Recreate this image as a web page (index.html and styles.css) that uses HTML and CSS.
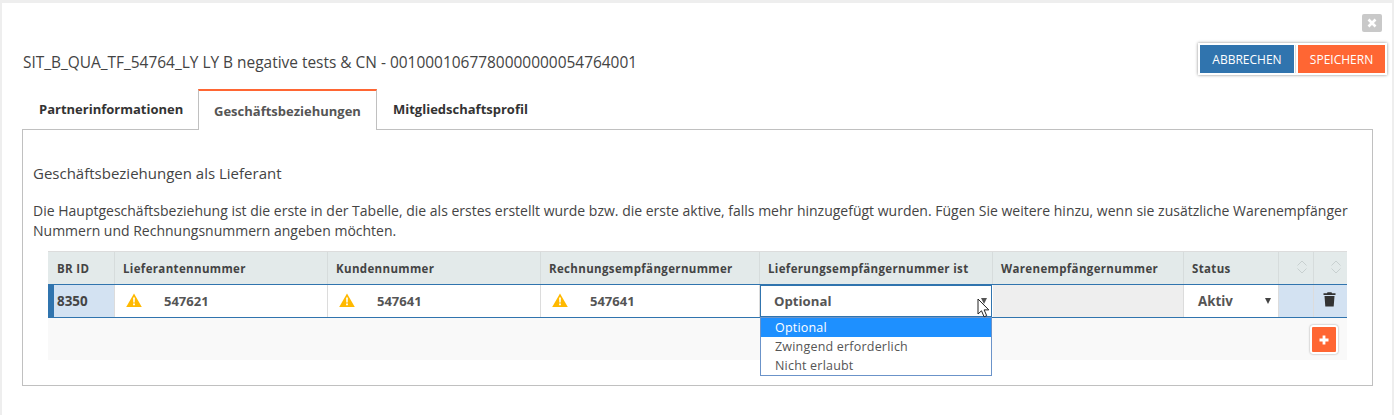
FILE: index.html
```html
<!DOCTYPE html>
<html lang="de">
<head>
<meta charset="utf-8">
<title>Geschäftsbeziehungen</title>
<link rel="stylesheet" href="styles.css">
</head>
<body>
<div class="modal">
  <div class="close-row">
    <span class="close-btn"><svg width="10" height="10" viewBox="0 0 10 10"><path d="M1.5 1.5l7 7M8.500 1.500l-7 7" stroke="#fff" stroke-width="2.600" fill="none"/></svg></span>
  </div>
  <header class="title-row">
    <h1 class="title">SIT_B_QUA_TF_54764_LY LY B negative tests &amp; CN - 0010001067780000000054764001</h1>
    <div class="actions">
      <button class="btn btn-blue">ABBRECHEN</button>
      <button class="btn btn-orange">SPEICHERN</button>
    </div>
  </header>
  <nav class="tabs">
    <span class="tab">Partnerinformationen</span>
    <span class="tab tab-active">Geschäftsbeziehungen</span>
    <span class="tab">Mitgliedschaftsprofil</span>
  </nav>
  <section class="panel">
    <h2 class="panel-title">Geschäftsbeziehungen als Lieferant</h2>
    <p class="panel-text">Die Hauptgeschäftsbeziehung ist die erste in der Tabelle, die als erstes erstellt wurde bzw. die erste aktive, falls mehr hinzugefügt wurden. Fügen Sie weitere hinzu, wenn sie zusätzliche Warenempfänger Nummern und Rechnungsnummern angeben möchten.</p>
    <div class="table">
      <div class="head">
        <div class="hc hc-id">BR ID</div>
        <div class="hc">Lieferantennummer</div>
        <div class="hc">Kundennummer</div>
        <div class="hc">Rechnungsempfängernummer</div>
        <div class="hc">Lieferungsempfängernummer ist</div>
        <div class="hc">Warenempfängernummer</div>
        <div class="hc">Status</div>
        <div class="hc hc-sort"><svg class="sort" width="12" height="16" viewBox="0 0 12 16"><path d="M1.500 6.500L6 2l4.500 4.500M1.500 9.500L6 14l4.500-4.500" stroke="#c8d0d0" fill="none"/></svg></div>
        <div class="hc hc-sort"><svg class="sort" width="12" height="16" viewBox="0 0 12 16"><path d="M1.500 6.500L6 2l4.500 4.500M1.500 9.500L6 14l4.500-4.500" stroke="#c8d0d0" fill="none"/></svg></div>
      </div>
      <div class="row">
        <div class="c c-id">8350</div>
        <div class="c c-num"><svg class="warn" width="16" height="14" viewBox="0 0 16 14"><path d="M8 0.500L15.800 14H0.200z" fill="#ffb900"/><path d="M7.100 4.500h1.800l-.2 5H7.300zM7.100 10.600h1.800v1.700H7.100z" fill="#fff"/></svg>547621</div>
        <div class="c c-num"><svg class="warn" width="16" height="14" viewBox="0 0 16 14"><path d="M8 0.500L15.800 14H0.200z" fill="#ffb900"/><path d="M7.100 4.500h1.800l-.2 5H7.300zM7.100 10.600h1.800v1.700H7.100z" fill="#fff"/></svg>547641</div>
        <div class="c c-num"><svg class="warn" width="16" height="14" viewBox="0 0 16 14"><path d="M8 0.500L15.800 14H0.200z" fill="#ffb900"/><path d="M7.100 4.500h1.800l-.2 5H7.300zM7.100 10.600h1.800v1.700H7.100z" fill="#fff"/></svg>547641</div>
        <div class="c c-select">
          <div class="select-open">Optional<span class="caret"></span></div>
          <ul class="dropdown">
            <li class="opt opt-on">Optional</li>
            <li class="opt">Zwingend erforderlich</li>
            <li class="opt">Nicht erlaubt</li>
          </ul>
          <svg class="cursor" width="14" height="20" viewBox="0 0 14 20"><path d="M1 1v15l3.500-3.200 2.600 6 2.600-1.100-2.600-5.800h4.700z" fill="#fff" stroke="#222" stroke-width="1"/></svg>
        </div>
        <div class="c c-disabled"></div>
        <div class="c c-status">Aktiv<span class="caret"></span></div>
        <div class="c c-blue"></div>
        <div class="c c-blue c-trash"><svg class="trash" width="13" height="16" viewBox="0 0 13 16"><path d="M4.500 1.200h4l.5 1h3.500v1.800H.5V2.200H4zM1.500 5h10l-.8 10.500H2.300z" fill="#333"/></svg></div>
      </div>
      <div class="foot"><button class="add"><svg width="10" height="10" viewBox="0 0 10 10"><path d="M5 0.500v9M0.500 5h9" stroke="#fff" stroke-width="2.800" fill="none"/></svg></button></div>
    </div>
  </section>
</div>
</body>
</html>
```
FILE: styles.css
```css
* { box-sizing: border-box; }
html, body { margin: 0; height: 100%; }
body { background: #eeeeee; padding: 3px 2px 0 2px; font-family: "Open Sans", sans-serif; color: #444; overflow: hidden; }
.modal { background: #fff; height: 412px; padding: 11px 5px 0 20px; }
.close-row { display: flex; justify-content: flex-end; height: 17px; padding-right: 5px; }
.close-btn { width: 20px; height: 18px; background: #c9c9c9; border-radius: 2px; display: flex; align-items: center; justify-content: center; }
.title-row { display: flex; justify-content: space-between; align-items: center; height: 32px; margin-top: 12px; }
.title { margin: 6px 0 0 1px; font-size: 15.450px; font-weight: 400; color: #444; letter-spacing: 0; }
.actions { display: flex; padding: 2px; background: #fff; box-shadow: 0 0 3px rgba(0,0,0,.45); height: 32px; width: 189px; }
.btn { border: 0; color: #fff; font-family: "Open Sans", sans-serif; font-size: 12px; height: 28px; padding: 0; }
.btn-blue { background: #3074ae; width: 94px; }
.btn-orange { background: #ff6633; width: 87px; margin-left: 4px; box-shadow: -2px 0 0 #fff, -3px 0 0 #dcdcdc; }
.tabs { display: flex; margin: 14px 0 0 0; height: 41px; position: relative; z-index: 1; }
.tab { font-size: 13px; font-weight: 700; color: #333; padding: 11px 15px 0 17px; width: 176px; }
.tab-active { width: 179px; background: #fff; color: #555; border: 1px solid #c0c0c0; border-top: 2px solid #ff6633; border-bottom: 0; padding: 11px 0 0 15px; height: 41px; }
.tab-active + .tab { padding-left: 16px; }
.panel { border: 1px solid #c0c0c0; width: 1351px; height: 257px; margin-top: -1px; padding: 33px 10px 0 10px; }
.panel-title { margin: 0; font-size: 15px; font-weight: 400; line-height: 20px; color: #444; }
.panel-text { margin: 18px 0 0 0; font-size: 14px; line-height: 20px; color: #444; width: 1325px; }
.table { margin: 10px 0 0 15px; width: 1299px; position: relative; background: #f9f9f9; height: 109px; }
.head, .row { display: grid; grid-template-columns: 67px 213px 213px 219px 233px 191px 95px 35px 33px; }
.head { height: 33px; background: #e3eaea; border-top: 1px solid #dcdcdc; }
.hc { font-size: 11.500px; font-weight: 700; color: #444; padding: 9px 0 0 8px; border-right: 1px solid #d6dcdc; white-space: nowrap; letter-spacing: .35px; }
.hc-id { padding-left: 9px; }
.hc:last-child { border-right: 0; }
.hc-sort { display: flex; justify-content: flex-end; padding: 7px 5px 0 0; }
.row { height: 34px; border-top: 1px solid #3074ae; border-bottom: 1px solid #3074ae; border-right: 1px solid #3074ae; background: #fff; }
.c { font-size: 13px; font-weight: 700; color: #555; border-right: 1px solid #dcdcdc; display: flex; align-items: center; height: 32px; }
.c-id { background: #d3e2f2; border-left: 6px solid #3074ae; padding-left: 3px; color: #444; font-size: 13.400px; }
.c-num { padding-left: 11px; }
.warn { margin: -2px 22px 0 0; }
.c-select { position: relative; border-right: 0; overflow: visible; }
.select-open { position: absolute; left: 0; top: 0; width: 232px; height: 32px; background: #fff; border: 1px solid #3074ae; padding: 0 0 0 13px; display: flex; align-items: center; font-size: 13.200px; z-index: 2; }
.caret { width: 0; height: 0; border-left: 3.500px solid transparent; border-right: 3.500px solid transparent; border-top: 6px solid #555; margin-left: auto; }
.select-open .caret { margin-right: 4px; margin-top: -1px; }
.dropdown { list-style: none; margin: 0; padding: 0; position: absolute; left: 0; top: 32px; width: 232px; height: 59px; background: #fff; border: 1px solid #6b93c9; z-index: 3; }
.opt { font-size: 12.500px; font-weight: 400; color: #555; height: 19px; line-height: 19px; padding-left: 14px; letter-spacing: .2px; }
.opt-on { background: #1e90ff; color: #fff; }
.cursor { position: absolute; left: 217px; top: 13px; z-index: 4; }
.c-disabled { background: #eeeeee; }
.c-status { padding: 0 4px 0 14px; font-size: 13.300px; }
.c-status .caret { margin-right: 3px; border-top-color: #444; }
.c-blue { background: #d3e2f2; }
.c-trash { justify-content: center; border-right: 0; padding-right: 2px; }
.trash { margin-top: -4px; }
.foot { height: 42px; display: flex; justify-content: flex-end; padding: 7px 9px 0 0; }
.add { width: 28px; height: 29px; padding: 0; border: 2px solid #fff; border-radius: 3px; background: #ff6633; box-shadow: 0 0 2px rgba(0,0,0,.4); display: flex; align-items: center; justify-content: center; }
```
